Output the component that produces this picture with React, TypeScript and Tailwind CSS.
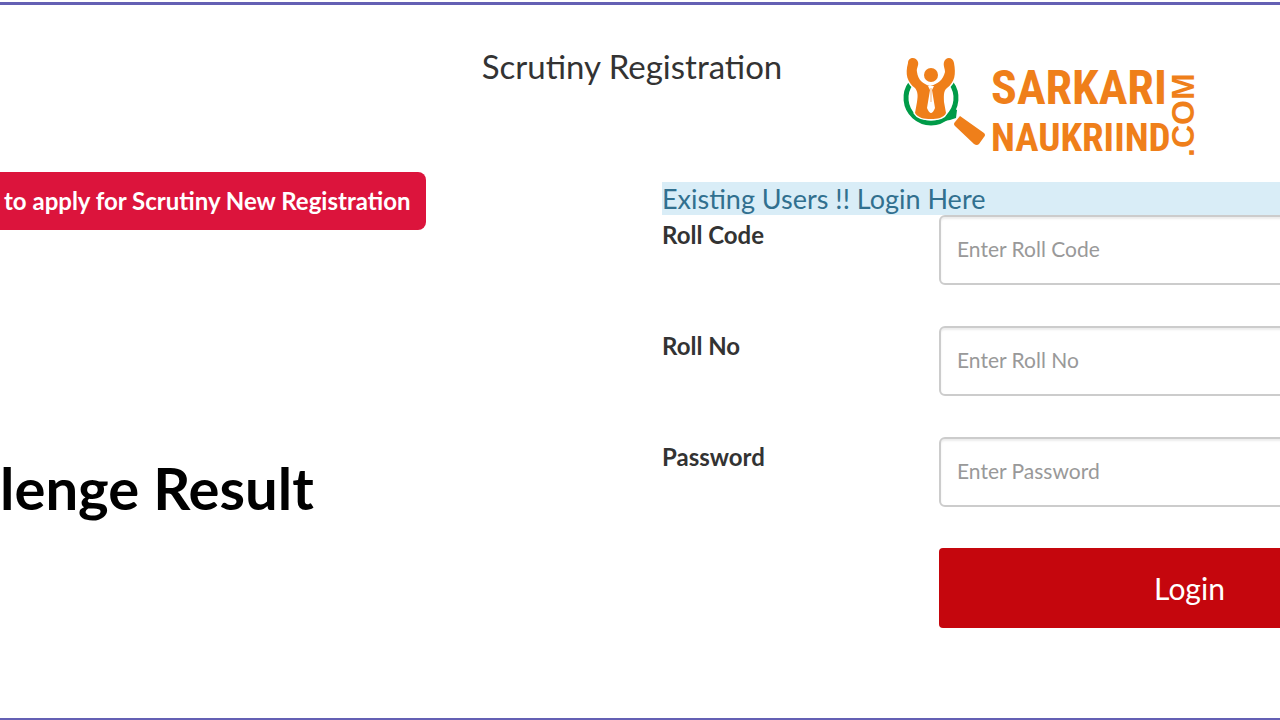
import React, { useState } from 'react';

interface Field {
  id: string;
  label: string;
  placeholder: string;
  type: string;
}

const fields: Field[] = [
  { id: 'rollCode', label: 'Roll Code', placeholder: 'Enter Roll Code', type: 'text' },
  { id: 'rollNo', label: 'Roll No', placeholder: 'Enter Roll No', type: 'text' },
  { id: 'password', label: 'Password', placeholder: 'Enter Password', type: 'password' },
];

const Logo = () => (
  <svg
    width="308"
    height="108"
    viewBox="0 0 308 108"
    role="img"
    aria-label="Sarkari Naukriind .com"
    className="shrink-0 font-['Roboto_Condensed','Liberation_Sans_Narrow','Liberation_Sans',sans-serif] font-bold"
  >
    {/* Magnifier ring and handle */}
    <path d="M9 31A25 25 0 1 0 49 31" fill="none" stroke="#009b48" strokeWidth="5" />
    <path d="M42 69L49 60L51 56L55 58L54 66L48 68Z" fill="#009b48" />
    <path d="M58 64L82 81Q84 83 82 85L77 92Q75 94 72 92L53 74Q51 72 53 70Z" fill="#ef7f1a" />
    {/* Figure with raised arms */}
    <path
      d="M6 11C6 5 14 4 16 10C17 14 14 16 15 20C16 28 21 32 28 34C36 32 41 28 43 20C43 16 41 14 42 10C44 4 51 5 52 11C54 22 53 30 45 36C41 39 42 45 42 50L44 61C42 66 35 67 29 67C22 67 16 66 13 61L15 50C16 44 16 40 13 36C5 30 3 22 6 11Z"
      fill="#ef7f1a"
      stroke="white"
      strokeWidth="3"
      paintOrder="stroke"
    />
    <circle cx="29" cy="23" r="7" fill="#ef7f1a" />
    <path d="M26 34L32 34L30 38L33 56C32 59 30 61 29 61C28 61 26 59 25 56L28 38Z" fill="white" />
    <path d="M28 36L30 36L30 50L28 50Z" fill="#ef7f1a" opacity="0.3" />
    <g fill="#ef7f1a">
      <text x="89" y="52" fontSize="48">SARKARI</text>
      <text x="89" y="99" fontSize="39">NAUKRIIND</text>
      <text
        transform="translate(292 105) rotate(-90)"
        fontSize="32"
        className="font-['Liberation_Sans',sans-serif]"
      >
        .COM
      </text>
    </g>
  </svg>
);

const LoginForm = () => {
  const [values, setValues] = useState<Record<string, string>>({});

  const handleSubmit = (e: React.FormEvent) => {
    e.preventDefault();
  };

  return (
    <form onSubmit={handleSubmit} className="-mr-40 mt-2.5">
      <h2 className="bg-[#d9edf7] text-[#31708f] text-[27px] leading-[33px]">Existing Users !! Login Here</h2>
      <div className="flex flex-col gap-[41px]">
        {fields.map((field) => (
          <div key={field.id} className="flex items-start">
            <label htmlFor={field.id} className="w-[277px] shrink-0 pt-1 text-2xl leading-8 font-bold text-[#333333]">
              {field.label}
            </label>
            <input
              id={field.id}
              type={field.type}
              placeholder={field.placeholder}
              value={values[field.id] ?? ''}
              onChange={(e) => setValues((prev) => ({ ...prev, [field.id]: e.target.value }))}
              className="h-[70px] min-w-0 flex-1 rounded-md border-2 border-[#cccccc] px-4 pb-1 text-[21px] text-[#333333] shadow-[inset_0_2px_2px_rgba(0,0,0,0.075)] placeholder:text-[#999999]"
            />
          </div>
        ))}
        <button type="submit" className="ml-[277px] h-20 rounded-sm bg-[#c5060d] text-[30px] text-white">
          Login
        </button>
      </div>
    </form>
  );
};

const App = () => {
  return (
    <div className="flex min-h-screen flex-col overflow-hidden bg-white pt-0.5 font-['Lato',sans-serif]">
      <div className="flex-1 border-t-[3px] border-b-2 border-[#6460b4]">
        <header className="grid grid-cols-[1fr_auto_1fr] items-start pt-[47px] pr-4">
          <h1 className="col-start-2 text-[33px] leading-7 text-[#333333]">Scrutiny Registration</h1>
          <div className="ml-[120px]">
            <Logo />
          </div>
        </header>

        <main className="grid grid-cols-[331fr_309fr] pt-3">
          <div>
            <button
              type="button"
              className="h-[58px] rounded-r-lg bg-[#dc143c] pr-4 pl-1 text-2xl font-bold whitespace-nowrap text-white"
            >
              to apply for Scrutiny New Registration
            </button>
            <h2 className="mt-[226px] text-[58px] leading-[64px] font-bold text-black">lenge Result</h2>
          </div>
          <LoginForm />
        </main>
      </div>
    </div>
  );
};

export default App;
